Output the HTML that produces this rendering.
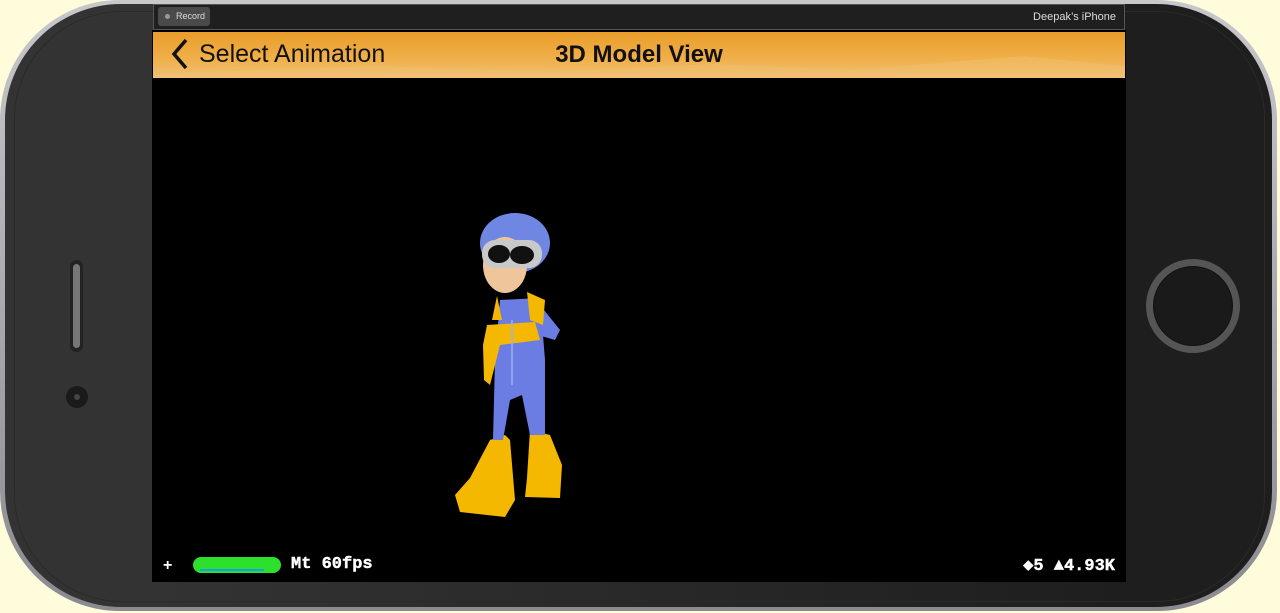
<!DOCTYPE html>
<html><head><meta charset="utf-8"><style>
html,body{margin:0;padding:0;width:1280px;height:613px;overflow:hidden;background:#fffcdc;font-family:"Liberation Sans",sans-serif}
.rim{position:absolute;left:0;top:0;width:1277px;height:611px;border-radius:120px;background:linear-gradient(#c8c8cc,#8a8a90);}
.body{position:absolute;left:5px;top:4px;width:1267px;height:603px;border-radius:116px;background:linear-gradient(90deg,#333 0,#333 152px,#1e1e1e 1126px,#1e1e1e 100%);}
.body2{position:absolute;left:14px;top:11px;width:1249px;height:589px;border-radius:108px;border:1px solid #2a2a2a;}
.sim{position:absolute;left:153px;top:4px;width:970px;height:24px;background:#1f1f1f;border:1px solid #555;}
.rec{position:absolute;left:4px;top:2px;width:52px;height:19px;background:#4a4a4a;border-radius:3px;color:#ddd;font-size:9px;line-height:19px;text-indent:18px}
.rec:before{content:"";position:absolute;left:7px;top:7px;width:5px;height:5px;border-radius:50%;background:#999}
.dev{position:absolute;right:8px;top:0;line-height:24px;color:#ddd;font-size:11px}
.screen{position:absolute;left:152px;top:30px;width:974px;height:552px;background:#000}
.nav{position:absolute;left:1px;top:2px;width:972px;height:46px;background:linear-gradient(#e99d2a,#f0b04a 60%,#eec07a);overflow:hidden}
.nav .t{position:absolute;left:0;width:100%;text-align:center;top:9px;font-size:24px;font-weight:bold;color:#111}
.nav .b{position:absolute;left:46px;top:8px;font-size:25px;color:#111}
.mono{font-family:"Liberation Mono","DejaVu Sans Mono",monospace;font-weight:bold;color:#fff;font-size:17px;position:absolute;-webkit-text-stroke:0.4px #fff}
</style></head><body>
<div class="rim"></div><div class="body"></div><div class="body2"></div>
<div style="position:absolute;left:70px;top:260px;width:13px;height:92px;border-radius:7px;background:#222"></div>
<div style="position:absolute;left:73px;top:264px;width:7px;height:84px;border-radius:4px;background:#777"></div>
<div style="position:absolute;left:66px;top:386px;width:22px;height:22px;border-radius:50%;background:#1a1a1a"></div>
<div style="position:absolute;left:74px;top:394px;width:6px;height:6px;border-radius:50%;background:#444"></div>
<div style="position:absolute;left:1146px;top:259px;width:80px;height:80px;border-radius:50%;border:7px solid #555;background:#1a1a1a;box-shadow:inset 0 0 0 1px #111"></div>
<div class="sim"><div class="rec">Record</div><div class="dev">Deepak’s iPhone</div></div>
<div class="screen">
<div class="nav">
<svg width="972" height="46" style="position:absolute;left:0;top:0"><path d="M0 42 L220 34 L400 40 L560 32 L700 38 L870 24 L972 34 L972 46 L0 46Z" fill="#f2c170" opacity=".45"/>
<path d="M33 8 L21 22 L33 36" stroke="#111" stroke-width="3.5" fill="none"/></svg>
<div class="b">Select Animation</div><div class="t">3D Model View</div></div>
<svg width="974" height="552" style="position:absolute;left:0;top:0">
<g transform="translate(-152,-30)">
<path d="M505 435 L490 440 L470 478 L455 495 L460 512 L505 517 L515 500 L510 440Z" fill="#f5b800"/>
<path d="M530 430 L527 478 L525 497 L560 498 L562 465 L550 435Z" fill="#f5b800"/>
<path d="M500 300 L540 298 L545 360 L545 435 L530 435 L522 395 L510 400 L503 440 L493 440 L495 360Z" fill="#6b7de3"/>
<path d="M540 305 L560 330 L555 340 L538 335Z" fill="#6b7de3"/>
<path d="M527 292 L545 300 L543 325 L530 320Z" fill="#f5b800"/>
<path d="M497 296 L502 320 L492 320Z" fill="#f5b800"/>
<path d="M487 325 L535 322 L540 340 L500 345 L490 385 L484 380 L483 345Z" fill="#f5b800"/>
<ellipse cx="515" cy="243" rx="35" ry="30" fill="#6f87e2"/>
<ellipse cx="505" cy="265" rx="22" ry="28" fill="#efc59c"/>
<rect x="482" y="240" width="60" height="28" rx="13" fill="#c9c9c9"/>
<ellipse cx="499" cy="254" rx="11" ry="9" fill="#111"/>
<ellipse cx="522" cy="255" rx="12" ry="9" fill="#111"/>
<path d="M512 385 L512 320" stroke="#9ab0ff" stroke-width="1.5"/>
</g>
<text x="11" y="540" fill="#fff" font-size="16" font-family="Liberation Sans" font-weight="bold">+</text>
<rect x="41" y="527" width="88" height="16" rx="8" fill="#2ee02e"/>
<path d="M48 540 H112" stroke="#1aa0e0" stroke-width="2"/>
</svg>
<div class="mono" style="left:139px;top:525px">Mt 60fps</div>
<div class="mono" style="right:11px;top:525px">◆5 ▲4.93K</div>
</div>
</body></html>
